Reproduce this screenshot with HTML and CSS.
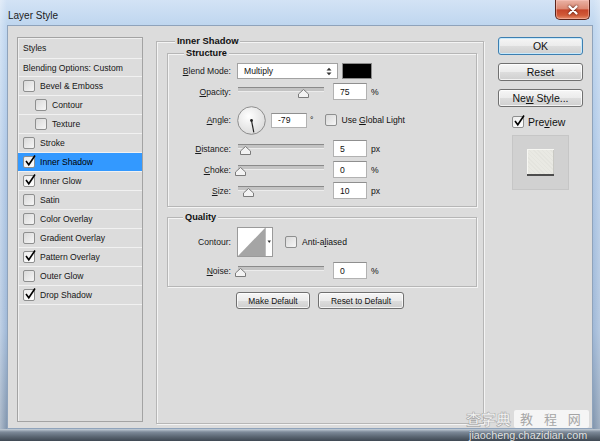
FILE: index.html
```html
<!DOCTYPE html>
<html lang="en">
<head>
<meta charset="utf-8">
<title>Layer Style</title>
<link rel="stylesheet" href="styles.css">
</head>
<body>
<div class="window">
  <div class="titlebar">
    <span class="title">Layer Style</span>
    <div class="close"><svg width="12" height="10" viewBox="0 0 12 10"><path d="M2.5 1.5 L9.5 8.5 M9.5 1.5 L2.5 8.5" stroke="#fff" stroke-width="2.2" stroke-linecap="round"/></svg></div>
  </div>
  <div class="client">
    <div class="styles">
      <div class="li head">Styles</div>
      <div class="li blend">Blending Options: Custom</div>
      <div class="li"><span class="cb"></span>Bevel &amp; Emboss</div>
      <div class="li sub"><span class="cb"></span>Contour</div>
      <div class="li sub"><span class="cb"></span>Texture</div>
      <div class="li"><span class="cb"></span>Stroke</div>
      <div class="li sel"><span class="cb on"><svg width="12" height="12" viewBox="0 0 12 12"><path d="M2 6 L4.8 9.8 L11 0.5" stroke="#000" stroke-width="1.6" fill="none"/></svg></span>Inner Shadow</div>
      <div class="li"><span class="cb on"><svg width="12" height="12" viewBox="0 0 12 12"><path d="M2 6 L4.8 9.8 L11 0.5" stroke="#000" stroke-width="1.6" fill="none"/></svg></span>Inner Glow</div>
      <div class="li"><span class="cb"></span>Satin</div>
      <div class="li"><span class="cb"></span>Color Overlay</div>
      <div class="li"><span class="cb"></span>Gradient Overlay</div>
      <div class="li"><span class="cb on"><svg width="12" height="12" viewBox="0 0 12 12"><path d="M2 6 L4.8 9.8 L11 0.5" stroke="#000" stroke-width="1.6" fill="none"/></svg></span>Pattern Overlay</div>
      <div class="li"><span class="cb"></span>Outer Glow</div>
      <div class="li"><span class="cb on"><svg width="12" height="12" viewBox="0 0 12 12"><path d="M2 6 L4.8 9.8 L11 0.5" stroke="#000" stroke-width="1.6" fill="none"/></svg></span>Drop Shadow</div>
    </div>

    <fieldset class="panel">
      <legend>Inner Shadow</legend>
      <fieldset class="group structure">
        <legend>Structure</legend>
        <div class="row r-blend">
          <span class="lbl"><u>B</u>lend Mode:</span>
          <div class="select"><span>Multiply</span><svg width="6" height="9" viewBox="0 0 6 9"><path d="M0.5 3.5 L3 0.8 L5.5 3.5 Z M0.5 5.5 L3 8.2 L5.5 5.5 Z" fill="#333"/></svg></div>
          <span class="swatch"></span>
        </div>
        <div class="row">
          <span class="lbl"><u>O</u>pacity:</span>
          <div class="slider"><div class="track"></div><svg class="thumb" style="left:61px" width="11" height="9" viewBox="0 0 11 9"><polygon points="5.5,0.5 10.5,5 10.5,8.5 0.5,8.5 0.5,5" fill="#f3f3f3" stroke="#7b7b7b"/></svg></div>
          <span class="num">75</span><span class="unit">%</span>
        </div>
        <div class="row r-angle">
          <span class="lbl"><u>A</u>ngle:</span>
          <svg class="dial" width="29" height="29" viewBox="0 0 29 29">
            <defs><radialGradient id="dg" cx="40%" cy="35%" r="70%"><stop offset="0" stop-color="#ffffff"/><stop offset="1" stop-color="#dadada"/></radialGradient></defs>
            <circle cx="14.5" cy="14.5" r="13.8" fill="url(#dg)" stroke="#8d8d8d"/>
            <line x1="14.5" y1="14.5" x2="16.8" y2="26.3" stroke="#222" stroke-width="1.2"/>
            <circle cx="14.5" cy="14.5" r="1.4" fill="#222"/>
          </svg>
          <span class="num angle">-79</span><span class="deg">°</span>
          <span class="cb gl"></span><span>Use <u>G</u>lobal Light</span>
        </div>
        <div class="row r-dist">
          <span class="lbl"><u>D</u>istance:</span>
          <div class="slider"><div class="track"></div><svg class="thumb" style="left:3px" width="11" height="9" viewBox="0 0 11 9"><polygon points="5.5,0.5 10.5,5 10.5,8.5 0.5,8.5 0.5,5" fill="#f3f3f3" stroke="#7b7b7b"/></svg></div>
          <span class="num">5</span><span class="unit">px</span>
        </div>
        <div class="row">
          <span class="lbl"><u>C</u>hoke:</span>
          <div class="slider"><div class="track"></div><svg class="thumb" style="left:-2px" width="11" height="9" viewBox="0 0 11 9"><polygon points="5.5,0.5 10.5,5 10.5,8.5 0.5,8.5 0.5,5" fill="#f3f3f3" stroke="#7b7b7b"/></svg></div>
          <span class="num">0</span><span class="unit">%</span>
        </div>
        <div class="row">
          <span class="lbl"><u>S</u>ize:</span>
          <div class="slider"><div class="track"></div><svg class="thumb" style="left:6px" width="11" height="9" viewBox="0 0 11 9"><polygon points="5.5,0.5 10.5,5 10.5,8.5 0.5,8.5 0.5,5" fill="#f3f3f3" stroke="#7b7b7b"/></svg></div>
          <span class="num">10</span><span class="unit">px</span>
        </div>
      </fieldset>

      <fieldset class="group quality">
        <legend>Quality</legend>
        <div class="row r-contour">
          <span class="lbl">Contour:</span>
          <svg class="contour" width="36" height="30" viewBox="0 0 36 30">
            <rect x="0.5" y="0.5" width="35" height="29" fill="#fff" stroke="#9a9a9a"/>
            <polygon points="1,29 28,1 28,29" fill="#a5a5a5"/>
            <line x1="28.5" y1="1" x2="28.5" y2="29" stroke="#bdbdbd"/>
            <polygon points="30.5,13.5 34,13.5 32.25,16" fill="#333"/>
          </svg>
          <span class="cb aa"></span><span>Anti-a<u>l</u>iased</span>
        </div>
        <div class="row r-noise">
          <span class="lbl"><u>N</u>oise:</span>
          <div class="slider"><div class="track"></div><svg class="thumb" style="left:-2px" width="11" height="9" viewBox="0 0 11 9"><polygon points="5.5,0.5 10.5,5 10.5,8.5 0.5,8.5 0.5,5" fill="#f3f3f3" stroke="#7b7b7b"/></svg></div>
          <span class="num">0</span><span class="unit">%</span>
        </div>
      </fieldset>

      <div class="btns">
        <button class="btn mk">Make Default</button>
        <button class="btn rs">Reset to Default</button>
      </div>
    </fieldset>

    <div class="actions">
      <button class="abtn default">OK</button>
      <button class="abtn">Reset</button>
      <button class="abtn">Ne<u>w</u> Style...</button>
      <div class="preview-row"><span class="cb on"><svg width="12" height="12" viewBox="0 0 12 12"><path d="M2 6 L4.8 9.8 L11 0.5" stroke="#000" stroke-width="1.6" fill="none"/></svg></span><span>Pre<u>v</u>iew</span></div>
      <div class="pbox"><div class="pswatch"></div></div>
    </div>
  </div>

  <div class="watermark">
    <div class="wm-top"><span class="wm-a">查字典</span><span class="wm-b">教 程 网</span></div>
    <div class="wm-url">jiaocheng.chazidian.com</div>
  </div>
</div>
</body>
</html>
```

FILE: styles.css
```css
* { box-sizing: border-box; }
html, body { margin: 0; padding: 0; }
body {
  width: 600px; height: 441px; overflow: hidden;
  font-family: "Liberation Sans", Arial, sans-serif;
  font-size: 8.6px; color: #111;
  background: #7d8ea3;
}
u { text-decoration: underline; text-underline-offset: 1px; }

.window {
  position: relative;
  width: 600px; height: 441px;
  padding: 0 7px;
  display: flex; flex-direction: column;
  background:
    linear-gradient(to bottom, rgba(0,0,0,0) 429px, #c4ced8 429px, #7d8a99 432px, #58636f 437px, #3e4853 441px),
    linear-gradient(to right, rgba(255,255,255,.35) 0, rgba(255,255,255,0) 7px, rgba(255,255,255,0) 593px, rgba(255,255,255,.25) 600px),
    linear-gradient(to bottom, #d3e3f5 0, #bfd6ef 25px, #adc7e6 150px, #9fb8d7 330px, #8195ad 429px);
}

.titlebar {
  flex: none; height: 25px;
  display: flex; justify-content: space-between; align-items: flex-start;
}
.title { padding: 10px 0 0 1px; font-size: 10px; line-height: 12px; color: #1b1b1b; }
.close {
  width: 35px; height: 20px; margin-right: 3px;
  display: flex; align-items: center; justify-content: center;
  border: 1px solid #5b241a; border-top: 0; border-radius: 0 0 5px 5px;
  background: linear-gradient(to bottom, #eab3a5 0, #dc8a74 45%, #c6462a 53%, #d15a38 80%, #e58e6c 100%);
  box-shadow: inset 0 0 0 1px rgba(255, 205, 195, .45);
}
.close svg { filter: drop-shadow(0 0 1px #3a0d06); }

.client {
  flex: none; height: 404px;
  border: 1px solid #8fa3bb;
  background: #dcdcdc;
  display: flex; align-items: flex-start;
  padding: 11px 9px 0 9px;
}

/* left list */
.styles {
  flex: none; width: 126px; height: 385px;
  border: 1px solid #a3a3a3;
  box-shadow: inset 1px 1px 0 #efefef;
}
.li {
  height: 19px;
  display: flex; align-items: center;
  padding-left: 5px;
  border-bottom: 1px solid #f1f1f1;
  white-space: nowrap;
  color: #161616;
}
.li.head { height: 21px; }
.li.blend { height: 18px; }
.li.sub { padding-left: 17px; }
.li.sel { background: #3399ff; color: #000; }

.cb {
  position: relative; flex: none;
  width: 12px; height: 12px; margin-right: 5px;
  border: 1px solid #8e8f8f; border-radius: 2px;
  background: linear-gradient(135deg, #d9d9d9, #f6f6f6);
}
.cb.on { background: linear-gradient(135deg, #ececec, #ffffff); }
.cb svg { position: absolute; left: 0; top: -2px; overflow: visible; }

/* middle panel */
fieldset { margin: 0; min-width: 0; }
.panel {
  flex: none; width: 328px; height: 389px;
  margin: -2px 0 0 13px; padding: 0;
  border: 1px solid #b6b6b6;
  box-shadow: inset 1px 1px 0 #f4f4f4, 1px 1px 0 #f4f4f4;
}
legend {
  padding: 0 2px; line-height: 12px;
  font-weight: bold; color: #111;
  background: #dcdcdc;
}
.panel > legend { margin-left: 18px; font-size: 9.4px; }
.group {
  margin: 0 6px 0 10px;
  padding: 4px 0 7px;
  border: 1px solid #b6b6b6;
  box-shadow: inset 1px 1px 0 #f4f4f4, 1px 1px 0 #f4f4f4;
}
.structure > legend { margin-left: 16px; font-size: 9.2px; }
.quality { margin-top: 4px; }
.quality > legend { margin-left: 15px; font-size: 9.2px; }

.row { display: flex; align-items: center; height: 17px; white-space: nowrap; }
.row + .row { margin-top: 4px; }
.row.r-blend { height: 16px; }
.row.r-angle { height: 30px; margin-top: 5px; }
.row.r-dist { margin-top: 5px; }
.row.r-contour { height: 30px; }
.row.r-noise { margin-top: 5px; }

.lbl { flex: none; width: 63px; margin-right: 6px; text-align: right; color: #1a1a1a; }

.select {
  flex: none; width: 101px; height: 16px;
  border: 1px solid #a2a2a2; background: #fff;
  display: flex; align-items: center; justify-content: space-between;
  padding: 0 5px 0 6px;
}
.swatch { flex: none; width: 30px; height: 16px; margin-left: 4px; background: #000; border: 1px solid #8c8c8c; }

.slider { position: relative; flex: none; width: 90px; height: 17px; }
.track {
  margin: 4px 3px 0 1px; height: 5px;
  background: #c3c3c3;
  border-top: 1px solid #8a8a8a; border-bottom: 1px solid #ececec;
}
.thumb { position: absolute; top: 6px; }

.num {
  flex: none; width: 34px; height: 17px; margin-left: 6px;
  display: flex; align-items: center; padding-left: 6px;
  background: #fff;
  border: 1px solid #b2b2b2; border-top-color: #8f8f8f;
}
.unit { margin-left: 4px; }

.dial { flex: none; }
.num.angle { width: 36px; height: 15px; margin-left: 5px; }
.deg { margin-left: 3px; }
.cb.gl { margin-left: 12px; margin-right: 4px; }

.contour { flex: none; }
.cb.aa { margin-left: 12px; margin-right: 5px; }

.btns { display: flex; justify-content: center; gap: 8px; margin-top: 5px; }
.btn, .abtn {
  font-family: inherit; color: #111; padding: 0;
  border: 1px solid #707070; border-radius: 3px;
  background: linear-gradient(to bottom, #f6f6f6 0, #ebebeb 50%, #dddddd 51%, #cfcfcf 100%);
  box-shadow: inset 0 0 0 1px rgba(255,255,255,.75);
}
.btn { height: 17px; font-size: 8.4px; }
.btn.mk { width: 74px; }
.btn.rs { width: 86px; }

/* right column */
.actions { flex: none; width: 85px; margin-left: 14px; display: flex; flex-direction: column; }
.abtn { height: 18px; margin-bottom: 8px; font-size: 10.5px; }
.abtn.default { border-color: #3c7fb1; box-shadow: inset 0 0 0 1px #c8e9fb; }
.preview-row { display: flex; align-items: center; height: 12px; margin: 1px 0 0 14px; font-size: 10.5px; }
.preview-row .cb { margin-right: 4px; }
.pbox {
  width: 57px; height: 55px; margin: 7px 0 0 14px;
  border: 1px solid #c6c6c6; background: #d1d1d1;
  display: flex; align-items: center; justify-content: center;
}
.pswatch {
  width: 27px; height: 27px;
  background:
    repeating-linear-gradient(45deg, rgba(0,0,0,.025) 0 1px, rgba(0,0,0,0) 1px 3px),
    #e9e9e3;
  border-bottom: 2px solid #4d4d4d;
  box-shadow: inset 1px 1px 0 #f7f7f3, inset -1px 0 0 #c9c9c4;
}

/* watermark overlay */
.watermark {
  position: absolute; left: 466px; top: 409px; width: 126px;
  display: flex; flex-direction: column; align-items: flex-start;
  font-family: "Noto Sans CJK SC", "Liberation Sans", sans-serif;
}
.wm-top { display: flex; align-items: center; height: 19px; }
.wm-a {
  font-size: 15px; line-height: 17px; font-weight: bold;
  color: rgba(255,255,255,.75);
  -webkit-text-stroke: 0.6px rgba(110,110,110,.55);
}
.wm-b {
  margin-left: 3px; padding: 0 4px 0 6px;
  font-size: 13px; line-height: 18px; letter-spacing: 4px;
  color: #a5a5a5; background: rgba(255,255,255,.72); border-radius: 2px;
}
.wm-url {
  margin: 2px 0 0 3px;
  font-family: "Liberation Sans", Arial, sans-serif;
  font-size: 10.8px; line-height: 10px;
  color: rgba(255,255,255,.85);
  text-shadow: 0 0 1px rgba(0,0,0,.35);
}
```
